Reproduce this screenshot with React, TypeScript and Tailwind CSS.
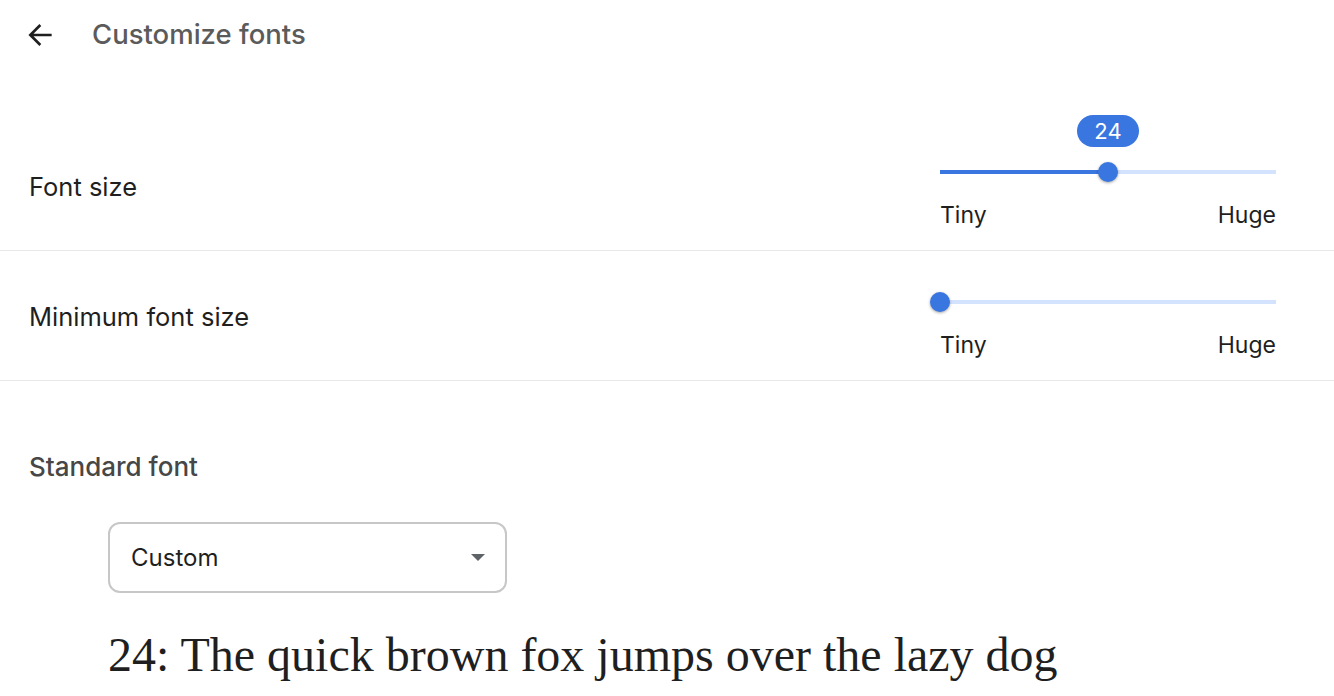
import React from 'react';

const font = { fontFamily: 'Inter, Roboto, "Noto Sans", sans-serif' };

function Slider({ pct, bubble }: { pct: number; bubble?: string }) {
  return (
    <div className="w-[336px]">
      <div className="relative h-[20px]">
        <div className="absolute left-0 right-0 top-[8px] h-[4px] bg-[#d3e3fd]" />
        <div className="absolute left-0 top-[8px] h-[4px] bg-[#3a76e0]" style={{ width: `${pct}%` }} />
        <div
          className="absolute top-0 h-[20px] w-[20px] -ml-[10px] rounded-full bg-[#3a76e0] shadow-[0_1px_3px_rgba(0,0,0,0.35)]"
          style={{ left: `${pct}%` }}
        />
        {bubble && (
          <div
            className="absolute top-[-47px] h-[32px] w-[62px] -ml-[31px] rounded-full bg-[#3a76e0] text-white text-[22px] flex items-center justify-center"
            style={{ left: `${pct}%` }}
          >
            {bubble}
          </div>
        )}
      </div>
      <div className="flex justify-between text-[23px] text-[#1f1f1f] mt-[21px] leading-[24px]">
        <span>Tiny</span>
        <span>Huge</span>
      </div>
    </div>
  );
}

export default function App() {
  return (
    <div className="w-[1334px] h-[696px] bg-white overflow-hidden" style={font}>
      <div className="flex items-center h-[70px] pl-[25px]">
        <svg width="32" height="32" viewBox="0 0 24 24" fill="none" stroke="#1f1f1f" strokeWidth="2">
          <path d="M20 12H4.5M11.5 4.5L4 12l7.5 7.5" />
        </svg>
        <span className="ml-[35px] text-[27.5px] font-medium text-[#5b5b5b]">Customize fonts</span>
      </div>

      <div className="flex items-start justify-between h-[181px] pl-[29px] pr-[58px] border-b border-[#e8e8e8]">
        <span className="text-[25.5px] leading-[32px] text-[#1f1f1f] mt-[101px]">Font size</span>
        <div className="mt-[92px]">
          <Slider pct={50} bubble="24" />
        </div>
      </div>

      <div className="flex items-start justify-between h-[130px] pl-[29px] pr-[58px] border-b border-[#e8e8e8]">
        <span className="text-[25.5px] leading-[32px] text-[#1f1f1f] mt-[50px]">Minimum font size</span>
        <div className="mt-[41px]">
          <Slider pct={0} />
        </div>
      </div>

      <div className="pl-[29px] pt-[70px]">
        <div className="text-[26px] leading-[32px] font-medium text-[#474747]">Standard font</div>
      </div>

      <div className="pl-[108px] pt-[39px]">
        <div className="w-[399px] h-[71px] rounded-[12px] border-2 border-[#c7c7c7] flex items-center justify-between pl-[21px] pr-[20px]">
          <span className="text-[24px] text-[#1f1f1f]">Custom</span>
          <svg width="14" height="8" viewBox="0 0 14 8">
            <path d="M0 0h14L7 7z" fill="#5f6368" />
          </svg>
        </div>
        <div
          className="mt-[38px] text-[48px] text-[#1f1f1f] leading-none"
          style={{ fontFamily: '"Liberation Serif", serif' }}
        >
          24: The quick brown fox jumps over the lazy dog
        </div>
      </div>
    </div>
  );
}
